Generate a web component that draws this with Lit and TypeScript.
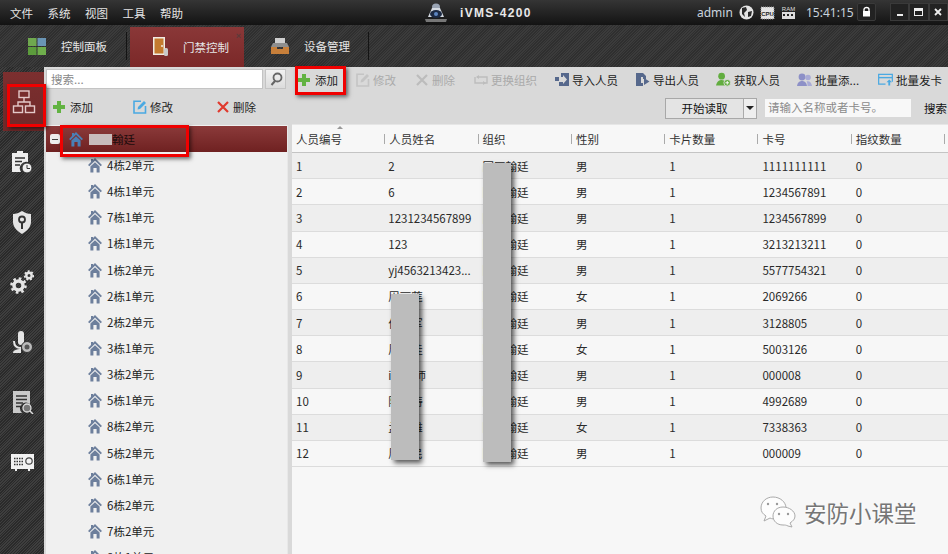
import { LitElement, html, css, svg } from 'lit';
import { customElement } from 'lit/decorators.js';

const house = (color: string) => html`<svg class="house" width="14" height="16" viewBox="0 0 14 16">
  <path fill=${color} d="M7 1 L14 8 L12.6 9.2 L7 3.8 L1.4 9.2 L0 8 L3 5 V2 H5 V3 Z M2.4 9.6 L7 5.3 L11.6 9.6 V15.5 H8.6 V11 H5.4 V15.5 H2.4 Z"/>
</svg>`;

const icons = {
  plus: (c: string) => html`<svg class="pad" width="12" height="12" viewBox="0 0 12 12"><path fill=${c} d="M4 0H8V4H12V8H8V12H4V8H0V4H4Z"/></svg>`,
  edit: (c: string, p: string) => html`<svg width="14" height="14" viewBox="0 0 14 14"><path fill="none" stroke=${c} stroke-width="1.6" d="M8 1.3H1V13H12.5V6"/><path fill=${p} d="M5 7 11 1 13 3 7 9 4.6 9.6Z"/></svg>`,
  cross: (c: string) => html`<svg class="pad1" width="12" height="12" viewBox="0 0 12 12"><path stroke=${c} stroke-width="2.2" d="M1 1 11 11M11 1 1 11"/></svg>`,
  swap: html`<svg width="14" height="12" viewBox="0 0 14 12"><path fill="none" stroke="#bdbdbd" stroke-width="1.4" d="M3 3H13V9H7M11 9H1V3"/><path fill="#bdbdbd" d="M5 1 2 3 5 5ZM9 7 12 9 9 11Z"/></svg>`,
  importer: html`<svg width="14" height="13" viewBox="0 0 14 13"><path fill="#56688c" d="M6 0H14V13H4V9H8V11L12 6.5 8 2V4H0V8H4V4H6Z"/></svg>`,
  exporter: html`<svg width="14" height="14" viewBox="0 0 14 14"><path fill="#56688c" d="M0 0H7L10 3V6H7V4H5V10H7V13H0ZM8 5 13.5 8.5 8 12Z"/></svg>`,
  fetch: html`<svg width="15" height="15" viewBox="0 0 16 15"><circle cx="6" cy="4" r="3.6" fill="#62ad3f"/><path fill="#62ad3f" d="M0 14C1 9 4 8 6 8S9 9 10 10V14Z"/><circle cx="12" cy="11" r="3.6" fill="#62ad3f" stroke="#d9d9d9"/><path stroke="#fff" d="M12 9V13M10 11H14"/></svg>`,
  batch: html`<svg width="15" height="14" viewBox="0 0 15 14"><circle cx="5" cy="4" r="3.4" fill="#8d90c7"/><circle cx="11" cy="4.5" r="2.8" fill="#a9abd6"/><path fill="#8d90c7" d="M0 13C.5 9 3 8 5 8S9.500 9 10 13Z"/><path fill="#a9abd6" d="M10.500 13C10.500 10 10 9 9.500 8.500 12 7.500 14.500 9 15 13Z"/></svg>`,
  card: html`<svg width="15" height="13" viewBox="0 0 16 13"><path fill="none" stroke="#4aa9e2" stroke-width="1.3" d="M8 11.500H.7V1H15.300V9"/><path stroke="#4aa9e2" stroke-width="1.500" d="M1 4.500H15"/><path fill="#4aa9e2" d="M12 6.500 15 9.500H13V13H11V9.500H9Z"/></svg>`,
  search: html`<svg width="14" height="14" viewBox="0 0 14 14"><circle cx="8.500" cy="5.500" r="4" fill="none" stroke="#666" stroke-width="1.800"/><path stroke="#666" stroke-width="2" d="M6 9 2.500 13"/></svg>`,
};

const railIcons = [
  svg`<g fill="none" stroke="#e3c9c9" stroke-width="1.400"><rect x="7" y="1" width="10" height="6.500"/><rect x="1.500" y="16" width="9" height="6.500"/><rect x="13.500" y="16" width="9" height="6.500"/><path d="M12 7.500V12M6 16V12H18V16"/></g>`,
  svg`<path fill="#eee" d="M2 3H7V1H13V3H18V12A6.500 6.500 0 0 0 11 22H2Z"/><path stroke="#333" stroke-width="1.500" d="M5 8H15M5 11.500H12M5 15H10"/><circle cx="17" cy="18" r="5" fill="#eee" stroke="#333"/><path stroke="#333" fill="none" d="M17 15V18.500H20"/>`,
  svg`<path fill="#e4e4e4" d="M12 1C15 3 18 4 21 4V12C21 17 17 21 12 24 7 21 3 17 3 12V4C6 4 9 3 12 1Z"/><circle cx="12" cy="9.500" r="3" fill="none" stroke="#333" stroke-width="1.800"/><path stroke="#333" stroke-width="2" d="M12 12.500V19"/>`,
  svg`<g fill="none" stroke="#e4e4e4"><circle cx="8.500" cy="15.500" r="4.500" stroke-width="3.500"/><circle cx="8.500" cy="15.500" r="7" stroke-width="2.600" stroke-dasharray="2.600 2.900"/><circle cx="19" cy="5.500" r="2.700" stroke-width="2.400"/><circle cx="19" cy="5.500" r="4.300" stroke-width="1.800" stroke-dasharray="1.800 1.900"/></g>`,
  svg`<rect x="8" y="1" width="6" height="14" rx="3" fill="#e4e4e4"/><path fill="none" stroke="#e4e4e4" stroke-width="2" d="M4 11C4 16 7 18 11 18"/><path fill="#e4e4e4" d="M3 23C3 20 7 19 11 19V23Z"/><circle cx="17" cy="17" r="5.500" fill="#bbb" stroke="#333"/><circle cx="17" cy="17" r="2.500" fill="#555"/>`,
  svg`<path fill="#c9c9c9" d="M3 1H20V14A6 6 0 0 0 12 23H3Z"/><path stroke="#333" stroke-width="1.500" d="M6 6H17M6 9.500H17M6 13H13M6 16.500H11"/><circle cx="17" cy="18" r="4" fill="#777" stroke="#ddd" stroke-width="1.300"/><path stroke="#ddd" stroke-width="1.500" d="M20 21 23 24"/>`,
  svg`<path fill="#f2f2f2" d="M1 4H24V19H20V21H18V19H7V21H5V19H1Z"/><path stroke="#333" stroke-width="1.500" stroke-dasharray="1.500 1" d="M4 8.500H14M4 11.500H14M4 14.500H14"/><circle cx="19" cy="11" r="3.200" fill="#f2f2f2" stroke="#444" stroke-width="1.200"/>`,
];

const units = ['4栋2单元', '4栋1单元', '7栋1单元', '1栋1单元', '1栋2单元', '2栋1单元', '2栋2单元', '3栋1单元', '3栋2单元', '5栋1单元', '8栋2单元', '5栋2单元', '6栋1单元', '6栋2单元', '7栋2单元', '8栋1单元'];

const columns = ['人员编号', '人员姓名', '组织', '性别', '卡片数量', '卡号', '指纹数量'];

const people = [
  ['1', '2', '男', '1111111111'],
  ['2', '6', '男', '1234567891'],
  ['3', '1231234567899', '男', '1234567899'],
  ['4', '123', '男', '3213213211'],
  ['5', 'yj4563213423...', '男', '5577754321'],
  ['6', '周丽莲', '女', '2069266'],
  ['7', '何建军', '男', '3128805'],
  ['8', '周文佳', '女', '5003126'],
  ['9', 'i工程师', '男', '000008'],
  ['10', '陈国涛', '男', '4992689'],
  ['11', '孟小雅', '女', '7338363'],
  ['12', '周建民', '男', '000009'],
];

@customElement('app-root')
export class AppRoot extends LitElement {
  static styles = css`
    :host {
      display: block;
      position: relative;
      width: 948px;
      height: 554px;
      overflow: hidden;
      font-family: "Noto Sans CJK SC", "Liberation Sans", sans-serif;
      font-size: 11.5px;
      color: #222;
      background: #d9d9d9;
    }
    svg { display: block; flex: none; }
    svg.pad { margin-right: 2px; }
    svg.pad1 { margin-right: 1px; }

    .topbar {
      height: 25px;
      display: flex;
      align-items: center;
      background: linear-gradient(#353535, #131313);
      color: #e4e4e4;
    }
    .menu { display: flex; flex: none; gap: 14.500px; padding-left: 10px; width: 425px; box-sizing: border-box; }
    .logo { margin-right: 13px; }
    .product {
      flex: none;
      font: bold 12px "Liberation Sans", sans-serif;
      letter-spacing: 1.300px;
      color: #e8e8e8;
      width: 237px;
    }
    .status { display: flex; flex: none; align-items: center; color: #c9d3de; font-family: "Noto Sans", sans-serif; font-size: 12px; }
    .status .who { width: 42px; }
    .status .meter { margin-right: 6px; }
    .status .time { margin-left: 10px; width: 51px; }
    .lockbtn, .winbtn {
      height: 18px;
      display: flex;
      align-items: center;
      justify-content: center;
      background: #222;
      border: 1px solid #3a3a3a;
      box-sizing: border-box;
    }
    .lockbtn { width: 19px; border-radius: 2px; margin-right: 14px; margin-top: -2px; }
    .winbtn { width: 19.300px; margin-top: -2px; }

    .tabs {
      height: 42px;
      display: flex;
      background: repeating-linear-gradient(135deg, #3b3b3b 0 1px, #2f2f2f 1px 2px);
      color: #e6e6e6;
    }
    .tab { display: flex; align-items: center; position: relative; }
    .tab::after {
      content: "";
      position: absolute;
      right: 0;
      top: 7px;
      bottom: 7px;
      width: 1px;
      background: #141414;
    }
    .tab.one { width: 127px; padding-left: 28px; box-sizing: border-box; gap: 15px; }
    .tab.two {
      width: 114px;
      margin: 2px 4px 0 3px;
      padding-left: 23px;
      box-sizing: border-box;
      gap: 14px;
      background: linear-gradient(#8a3838, #7b2828);
    }
    .tab.two::after { display: none; }
    .tab .close { position: absolute; right: 3px; top: 4px; color: #5c3a3a; font: bold 9px "Liberation Sans", sans-serif; }
    .tab.three { width: 121px; padding-left: 23px; box-sizing: border-box; gap: 15px; }

    .body { height: 487px; display: flex; }
    .rail {
      width: 44px;
      flex: none;
      padding-top: 5px;
      box-sizing: border-box;
      background: repeating-linear-gradient(135deg, #3e3e3e 0 1px, #2a2a2a 1px 2px);
    }
    .slot { height: 60px; display: flex; align-items: center; justify-content: center; }
    .slot.active {
      height: 59px;
      margin: 0 0 1px 3px;
      background: linear-gradient(#7c2f2f, #6f2a2a);
    }

    .left { width: 246px; flex: none; display: flex; flex-direction: column; }
    .searchrow { height: 29px; display: flex; gap: 2px; padding: 2px 0 0 2px; box-sizing: border-box; }
    .searchbox {
      width: 217px;
      height: 20px;
      background: #fff;
      border: 1px solid #c4c4c4;
      box-sizing: border-box;
      color: #888;
      padding-left: 4px;
      line-height: 18px;
    }
    .searchbtn {
      width: 21px;
      height: 20px;
      background: linear-gradient(#f2f2f2, #dcdcdc);
      border: 1px solid #c4c4c4;
      box-sizing: border-box;
      display: flex;
      align-items: center;
      justify-content: center;
    }
    .leftactions {
      height: 29px;
      display: grid;
      grid-template-columns: 80px 84px auto;
      padding: 0 0 8px 9px;
      box-sizing: border-box;
      align-items: center;
    }
    .action { display: flex; align-items: center; gap: 3px; white-space: nowrap; }
    .tree {
      flex: 1;
      margin-left: 2px;
      margin-right: 3px;
      background: #f0f0f0;
      overflow: hidden;
      box-shadow: 1px 0 0 #e8e8e8;
    }
    .treeroot {
      height: 26px;
      margin-top: 1px;
      display: flex;
      align-items: center;
      background: linear-gradient(#8b3a3a, #6f2121);
      color: #1c0c0c;
      padding-left: 4px;
    }
    .minus {
      width: 10px;
      height: 10px;
      border-radius: 2px;
      background: #eee;
      margin-right: 9px;
      display: flex;
      align-items: center;
      justify-content: center;
    }
    .minus::before { content: ""; width: 6px; height: 1px; background: #444; }
    .blur { width: 23px; height: 11px; background: #c8bcbc; margin-left: 6px; }
    .unit {
      height: 26.150px;
      display: flex;
      align-items: center;
      gap: 5px;
      padding-left: 42px;
    }

    .right { flex: 1; display: flex; flex-direction: column; min-width: 0; }
    .tools {
      height: 29px;
      display: grid;
      grid-template-columns: 58px 60px 58px 81px 81px 80px 81px 81px auto;
      padding: 0 0 4px 8px;
      box-sizing: border-box;
      align-items: center;
    }
    .tools .off { color: #aaa; }
    .filters {
      height: 29px;
      display: flex;
      align-items: center;
      padding-left: 375px;
    }
    .reader {
      width: 92px;
      height: 21px;
      display: flex;
      border: 1px solid #a8a8a8;
      box-sizing: border-box;
      margin-right: 8px;
      margin-top: -5px;
      background: #e4e4e4;
    }
    .reader .go { flex: 1; text-align: center; line-height: 19px; color: #111; border-right: 1px solid #aaa; }
    .reader .drop { width: 12px; display: flex; align-items: center; justify-content: center; background: #eee; }
    .reader .drop::before {
      content: "";
      border: 4px solid transparent;
      border-top-color: #222;
      border-bottom-width: 0;
    }
    .cardsearch {
      width: 146px;
      height: 18px;
      background: #f8f8f8;
      color: #8a8a8a;
      padding-left: 3px;
      box-sizing: border-box;
      line-height: 17px;
      margin-top: -5px;
      margin-right: 13px;
    }
    .go2 { margin-top: -5px; white-space: nowrap; color: #111; }

    .table { flex: 1; margin-left: 2px; background: #f7f7f7; }
    .thead, .row {
      display: grid;
      grid-template-columns: repeat(7, 93.300px);
      box-sizing: border-box;
    }
    .thead {
      height: 28px;
      align-items: center;
      background: #f7f7f7;
      border-bottom: 1px solid #c4c4c4;
      box-shadow: 0 -1px 0 #e6e6e6;
    }
    .th { position: relative; padding-left: 4px; color: #333; white-space: nowrap; }
    .th::after {
      content: "";
      position: absolute;
      right: 0;
      top: 3px;
      height: 10px;
      width: 1px;
      background: #aaa;
    }
    .th.sorted::before {
      content: "";
      position: absolute;
      left: 45px;
      top: -5px;
      border: 3px solid transparent;
      border-bottom-color: #999;
      border-top-width: 0;
    }
    .row {
      height: 26.180px;
      align-items: center;
      border-bottom: 1px solid #dcdcdc;
      background: #f7f7f7;
    }
    .row.odd { background: #eeeeee; }
    .td { padding-left: 4px; white-space: nowrap; overflow: hidden; color: #2a2a2a; }
    .td.gap { padding-left: 3px; }

    .mask {
      position: absolute;
      background: #bcbcbc;
      box-shadow: 3px 3px 5px rgba(0, 0, 0, 0.65);
    }
    .mask.names { left: 391px; top: 294px; width: 28px; height: 166px; }
    .mask.orgs { left: 483px; top: 163px; width: 28px; height: 299px; }

    .mark {
      position: absolute;
      border: 3px solid #f00000;
      box-sizing: border-box;
      box-shadow: 2px 2px 4px rgba(0, 0, 0, 0.55);
    }
    .mark.on-rail { left: 7px; top: 84px; width: 39px; height: 43px; }
    .mark.on-add { left: 295px; top: 66px; width: 51px; height: 29px; }
    .mark.on-root { left: 60px; top: 125px; width: 129px; height: 32px; }

    .watermark {
      position: absolute;
      left: 760px;
      top: 496px;
      display: flex;
      align-items: center;
      gap: 8px;
      color: #767676;
      font-size: 22.500px;
      text-shadow: 1px 1px 0 #fff;
    }
  `;

  render() {
    return html`
      <div class="topbar">
        <div class="menu"><span>文件</span><span>系统</span><span>视图</span><span>工具</span><span>帮助</span></div>
        <svg class="logo" width="22" height="20" viewBox="0 0 22 20">
          <ellipse cx="11" cy="4" rx="4" ry="3.500" fill="#9aa4b4"/>
          <path fill="#d5dae2" d="M7 5H15L19 14H3Z"/>
          <ellipse cx="11" cy="11" rx="6" ry="4" fill="#1c2a44"/>
          <circle cx="11" cy="11" r="2" fill="#5d86c2"/>
          <path fill="#777" d="M0 16H22L21 19H1Z"/>
        </svg>
        <div class="product">iVMS-4200</div>
        <div class="status">
          <span class="who">admin</span>
          <svg class="meter" width="15" height="15" viewBox="0 0 15 15"><circle cx="7.500" cy="7.500" r="7" fill="#e4e4e4"/><path fill="#2a2a2a" d="M3 3 7 2 8 5 5 8 6 12 3 9ZM9 7 13 6 12 11 9 12Z"/></svg>
          <svg class="meter" width="15" height="14" viewBox="0 0 15 14"><rect x="1" y="1" width="13" height="12" fill="#e4e4e4" stroke="#999" stroke-dasharray="1 1"/><text x="7.500" y="9.500" font-size="6" font-family="Liberation Sans" font-weight="bold" text-anchor="middle" fill="#222">CPU</text></svg>
          <svg width="15" height="15" viewBox="0 0 15 15"><text x="7.500" y="6" font-size="6" font-family="Liberation Sans" text-anchor="middle" fill="#ddd">RAM</text><rect x="1" y="7" width="13" height="7" fill="#ddd"/><path stroke="#222" stroke-width="2" stroke-dasharray="2 2" d="M2 10H14"/></svg>
          <span class="time">15:41:15</span>
          <div class="lockbtn"><svg width="9" height="11" viewBox="0 0 9 11"><path fill="none" stroke="#fff" stroke-width="1.400" d="M2 5V3.500C2 .8 7 .8 7 3.500V5"/><rect x="1" y="5" width="7" height="5.500" fill="#fff"/></svg></div>
          <div class="winbtn"><svg width="8" height="8" viewBox="0 0 8 8"><path fill="#eee" d="M1 6H7V8H1Z"/></svg></div>
          <div class="winbtn"><svg width="9" height="8" viewBox="0 0 9 8"><rect x=".5" y=".5" width="8" height="7" fill="none" stroke="#eee"/><path stroke="#eee" stroke-width="2" d="M0 2H9"/></svg></div>
          <div class="winbtn"><svg width="8" height="8" viewBox="0 0 8 8"><path stroke="#eee" stroke-width="1.800" d="M1 1 7 7M7 1 1 7"/></svg></div>
        </div>
      </div>

      <div class="tabs">
        <div class="tab one">
          <svg width="18" height="17" viewBox="0 0 18 17">
            <rect width="8.500" height="8" fill="#6fa84f"/><rect x="9.500" width="8.500" height="8" fill="#6a95b5"/>
            <rect y="9" width="8.500" height="8" fill="#5c9c3c"/><rect x="9.500" y="9" width="8.500" height="8" fill="#6fae4c"/>
          </svg>
          <span>控制面板</span>
        </div>
        <div class="tab two">
          <svg width="16" height="20" viewBox="0 0 16 20">
            <rect width="12" height="18" fill="#f1ece4"/><rect x="1.500" y="1.500" width="9" height="15" fill="#c47a2e"/>
            <circle cx="9" cy="9" r="1" fill="#f1ece4"/><rect x="11" y="11" width="4" height="8" rx="1.500" fill="#c9c9c9"/>
          </svg>
          <span>门禁控制</span>
          <span class="close">×</span>
        </div>
        <div class="tab three">
          <svg width="18" height="16" viewBox="0 0 18 16">
            <rect x="4" y="0" width="10" height="5" fill="#cfcfcf"/><path fill="#8e8e8e" d="M2 5H16L18 9H0Z"/>
            <path fill="#c77f3a" d="M0 9H6V11H12V9H18V16H0Z"/>
          </svg>
          <span>设备管理</span>
        </div>
      </div>

      <div class="body">
        <div class="rail">
          ${railIcons.map((g, i) => html`<div class="slot ${i === 0 ? 'active' : ''}"><svg width="24" height="24" viewBox="0 0 24 24">${g}</svg></div>`)}
        </div>

        <div class="left">
          <div class="searchrow">
            <div class="searchbox">搜索...</div>
            <div class="searchbtn">${icons.search}</div>
          </div>
          <div class="leftactions">
            <div class="action">${icons.plus('#62b342')}<span>添加</span></div>
            <div class="action">${icons.edit('#4aa9e2', '#4aa9e2')}<span>修改</span></div>
            <div class="action">${icons.cross('#e03a2e')}<span>删除</span></div>
          </div>
          <div class="tree">
            <div class="treeroot">
              <span class="minus"></span>
              ${house('#4a7fb5')}
              <span class="blur"></span><span>翰廷</span>
            </div>
            ${units.map((u) => html`<div class="unit">${house('#6d7f9c')}<span>${u}</span></div>`)}
          </div>
        </div>

        <div class="right">
          <div class="tools">
            <div class="action">${icons.plus('#62b342')}<span>添加</span></div>
            <div class="action off">${icons.edit('#c4c4c4', '#c4c4c4')}<span>修改</span></div>
            <div class="action off">${icons.cross('#bcbcbc')}<span>删除</span></div>
            <div class="action off">${icons.swap}<span>更换组织</span></div>
            <div class="action">${icons.importer}<span>导入人员</span></div>
            <div class="action">${icons.exporter}<span>导出人员</span></div>
            <div class="action">${icons.fetch}<span>获取人员</span></div>
            <div class="action">${icons.batch}<span>批量添...</span></div>
            <div class="action">${icons.card}<span>批量发卡</span></div>
          </div>
          <div class="filters">
            <div class="reader"><span class="go">开始读取</span><span class="drop"></span></div>
            <div class="cardsearch">请输入名称或者卡号。</div>
            <span class="go2">搜索</span>
          </div>
          <div class="table">
            <div class="thead">
              ${columns.map((c, i) => html`<div class="th ${i === 0 ? 'sorted' : ''}">${c}</div>`)}
            </div>
            ${people.map((p, i) => html`
              <div class="row ${i % 2 === 0 ? 'odd' : ''}">
                <div class="td">${p[0]}</div>
                <div class="td gap">${p[1]}</div>
                <div class="td">园区翰廷</div>
                <div class="td">${p[2]}</div>
                <div class="td">1</div>
                <div class="td">${p[3]}</div>
                <div class="td">0</div>
              </div>`)}
          </div>
        </div>
      </div>

      <div class="mask names"></div>
      <div class="mask orgs"></div>
      <div class="mark on-rail"></div>
      <div class="mark on-add"></div>
      <div class="mark on-root"></div>

      <div class="watermark">
        <svg width="36" height="32" viewBox="0 0 36 32">
          <path fill="#fdfdfd" stroke="#aaa" d="M13 1C6 1 1 6 1 12C1 16 3 18 6 20L4 25 10 22C12 23 14 23 16 23C24 23 26 17 26 12C26 6 20 1 13 1Z"/>
          <path fill="#fdfdfd" stroke="#aaa" d="M23 11C17 11 13 15 13 20C13 25 17 29 23 29C25 29 26 29 28 30L32 31 30 27C33 25 35 23 35 20C35 15 29 11 23 11Z"/>
          <g fill="#999"><circle cx="8" cy="8" r="1.200"/><circle cx="17" cy="8" r="1.200"/><circle cx="19" cy="18" r="1.200"/><circle cx="28" cy="18" r="1.200"/></g>
        </svg>
        <span>安防小课堂</span>
      </div>
    `;
  }
}
